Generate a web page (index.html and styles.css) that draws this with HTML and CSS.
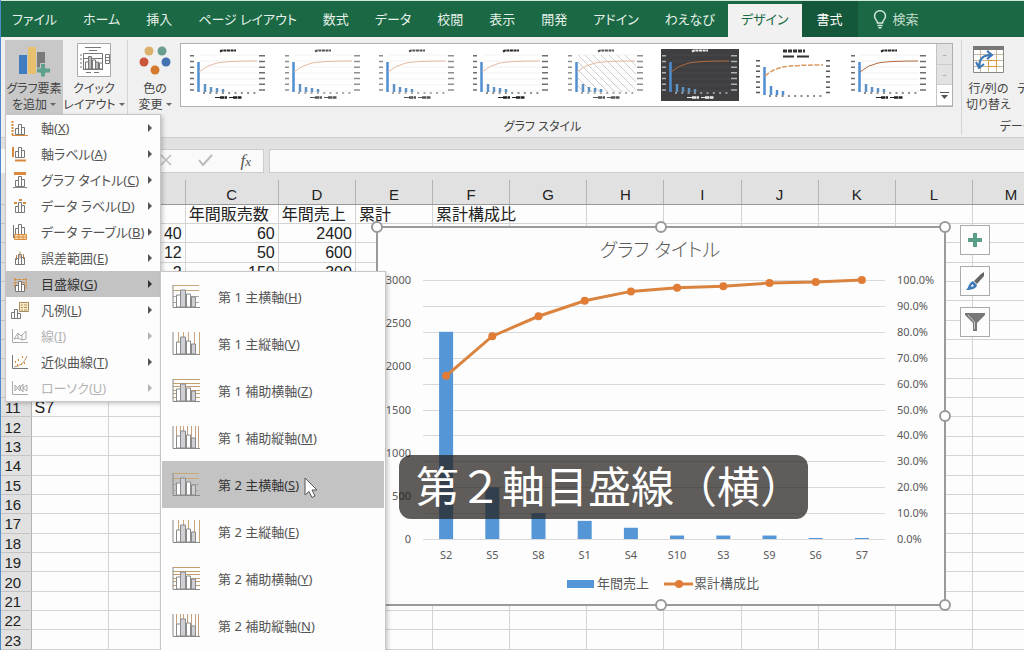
FILE: index.html
```html
<!DOCTYPE html>
<html lang="ja">
<head>
    <meta charset="UTF-8">
    <title>グラフ ツール - デザイン</title>
    <link rel="stylesheet" href="styles.css">
</head>
<body>
    <!-- shared icon shapes -->
    <svg class="defs" aria-hidden="true">
        <symbol id="mini-bars" viewBox="0 0 18 16">
            <path d="M4.500 14.500v-6h3v6zM7.500 14.500v-10h3v10zM10.500 14.500v-7h3v7z" fill="#fff" stroke="#777"/>
        </symbol>
        <symbol id="sub-bars" viewBox="0 0 28 24">
            <path d="M1 0v22.500h27" fill="none" stroke="#8a8a8a"/>
            <path d="M4.500 22v-12h4v12zM14.500 22v-13h4v13z" fill="#fff" stroke="#8a8a8a"/>
            <path d="M8.500 22v-17h5v17zM19.500 22v-10h4v10z" fill="#d0d0d4" stroke="#8a8a8a"/>
        </symbol>
        <symbol id="h-major" viewBox="0 0 28 24">
            <path d="M1 .5h26M1 5.500h26" stroke="#c9a878"/>
            <path d="M1 11.500h26M1 17.500h26" stroke="#aaa"/>
        </symbol>
        <symbol id="v-major" viewBox="0 0 28 24">
            <path d="M6.500 0v22M11.500 0v22M16.500 0v22M22.500 0v22M27.500 0v22" stroke="#c9a878"/>
        </symbol>
        <symbol id="h-minor" viewBox="0 0 28 24">
            <path d="M1 .5h27M1 4.500h27M1 7.500h27M1 11.500h27M1 14.500h27M1 18.500h27" stroke="#c4a06c"/>
        </symbol>
        <symbol id="v-minor" viewBox="0 0 28 24">
            <path d="M4.500 0v22M8.500 0v22M11.500 0v22M15.500 0v22M19.500 0v22M23.500 0v22M26.500 0v22" stroke="#c4a080"/>
        </symbol>
        <symbol id="thumb" viewBox="0 0 90 58">
            <path d="M17 9h58M17 15h58M17 21h58M17 27h58M17 33h58M17 39h58M17 45h58" stroke="currentColor" stroke-width=".5" opacity=".12"/>
            <path d="M37 5.500l2-1h14" stroke="currentColor" stroke-width="2" stroke-dasharray="3 .6" fill="none"/>
            <path d="M9 9v38" stroke="currentColor" stroke-width="4" stroke-dasharray="1.500 4.200" opacity=".65"/>
            <path d="M79 9v38" stroke="currentColor" stroke-width="6" stroke-dasharray="1.500 4.200" opacity=".65"/>
            <path d="M20 47h55" stroke="currentColor" stroke-width="2" stroke-dasharray="2 4.300" opacity=".5"/>
            <path d="M15.500 16v30" stroke="#4f8fd0" stroke-width="2.500"/>
            <path d="M22 38v8M28 41v5M34 42v4M40 43v3" stroke="#5f93c4" stroke-width="2.500"/>
            <path d="M32 51.500h5M46 51.500h4" stroke="currentColor" stroke-width="1"/>
            <path d="M37 51.500h7M50 51.500h9" stroke="currentColor" stroke-width="2.500" stroke-dasharray="4 .5"/>
        </symbol>
        <symbol id="curve" viewBox="0 0 90 58">
            <path d="M16 26Q24 19 34 17T74 15" fill="none" stroke="currentColor"/>
        </symbol>
    </svg>

    <nav class="tabs">
        <button class="tab">ファイル</button>
        <button class="tab">ホーム</button>
        <button class="tab">挿入</button>
        <button class="tab">ページ レイアウト</button>
        <button class="tab">数式</button>
        <button class="tab">データ</button>
        <button class="tab">校閲</button>
        <button class="tab">表示</button>
        <button class="tab">開発</button>
        <button class="tab">アドイン</button>
        <button class="tab">わえなび</button>
        <button class="tab active">デザイン</button>
        <button class="tab context">書式</button>
        <button class="tab search">
            <svg width="14" height="19" viewBox="0 0 14 19" fill="none" stroke="#d5e8dd" stroke-width="1.500">
                <path d="M4.500 13c0-2.500-3-3.500-3-7a5.500 5.200 0 0 1 11 0c0 3.500-3 4.500-3 7zM4.500 15.500h5M5.500 17.800h3"/>
            </svg>
            検索
        </button>
    </nav>

    <div class="ribbon">
        <section class="group">
            <div class="tools">
                <div class="dropdown">
                    <button class="tool pressed">
                        <svg width="34" height="34" viewBox="0 0 34 34">
                            <path fill="#3f7cc0" d="M2 12h8v19H2z"/>
                            <path fill="#e6c06c" d="M11 4h8v27h-8z"/>
                            <path fill="#7a7a7a" d="M20 9h8v12h-4v4h-4z"/>
                            <path fill="#5fa08e" stroke="#c8c8c8" d="M23.500 20.500h5v4.500h5v5h-5v4h-5v-4h-4v-5h4z"/>
                        </svg>
                        <span>グラフ要素<br>を追加 <i class="caret"></i></span>
                    </button>
                    <ul class="menu">
                        <li><button>
                            <svg width="18" height="16"><use href="#mini-bars"/><path d="M1.500 1v14" stroke="#d98a3d" stroke-width="2" stroke-dasharray="2 1"/><path d="M1 15.500h16" stroke="#d98a3d"/></svg>
                            <span>軸(<u>X</u>)</span><i class="arrow"></i></button></li>
                        <li><button>
                            <svg width="18" height="16"><use href="#mini-bars" y="-3"/><path d="M2 1v10M4 14.500h11" stroke="#d98a3d" stroke-width="2"/></svg>
                            <span>軸ラベル(<u>A</u>)</span><i class="arrow"></i></button></li>
                        <li><button>
                            <svg width="18" height="16"><use href="#mini-bars"/><path d="M3 1.500h12" stroke="#d98a3d" stroke-width="3"/><path d="M2 15.500h14" stroke="#888"/></svg>
                            <span>グラフ タイトル(<u>C</u>)</span><i class="arrow"></i></button></li>
                        <li><button>
                            <svg width="18" height="16"><use href="#mini-bars"/><path d="M3 5h3M8 2h3M12 5h3" stroke="#d98a3d" stroke-width="2"/></svg>
                            <span>データ ラベル(<u>D</u>)</span><i class="arrow"></i></button></li>
                        <li><button>
                            <svg width="18" height="16"><use href="#mini-bars" y="-4"/><path d="M2.500 1v13" stroke="#777"/><path d="M3.500 10.500h12v5h-12zM3.500 13h12M8 10v6M12 10v6" fill="#f8dfb5" stroke="#d98a3d"/></svg>
                            <span>データ テーブル(<u>B</u>)</span><i class="arrow"></i></button></li>
                        <li><button>
                            <svg width="18" height="16"><use href="#mini-bars"/><path d="M5.500 5v5M9 1.500v7M12.500 4v5" stroke="#b08050"/></svg>
                            <span>誤差範囲(<u>E</u>)</span><i class="arrow"></i></button></li>
                        <li class="selected"><button>
                            <svg width="18" height="16"><path d="M3 3.500h13M3 6.500h13M3 9.500h13M4 2v12M15 2v12" stroke="#d98a3d" stroke-dasharray="3 1"/><use href="#mini-bars" y="1"/></svg>
                            <span>目盛線(<u>G</u>)</span><i class="arrow"></i></button>
                            <ul class="menu submenu">
                                <li><button><svg width="28" height="24"><use href="#h-major"/><use href="#sub-bars"/></svg><span>第 1 主横軸(<u>H</u>)</span></button></li>
                                <li><button><svg width="28" height="24"><use href="#v-major"/><use href="#sub-bars"/></svg><span>第 1 主縦軸(<u>V</u>)</span></button></li>
                                <li><button><svg width="28" height="24"><use href="#h-minor"/><use href="#sub-bars"/></svg><span>第 1 補助横軸(<u>Z</u>)</span></button></li>
                                <li><button><svg width="28" height="24"><use href="#v-minor"/><use href="#sub-bars"/></svg><span>第 1 補助縦軸(<u>M</u>)</span></button></li>
                                <li class="selected"><button><svg width="28" height="24"><use href="#h-major"/><use href="#sub-bars"/></svg><span>第 2 主横軸(<u>S</u>)</span></button>
                                    <svg class="pointer" width="14" height="22" viewBox="0 0 14 22"><path d="M1 1v17l4-3.500 3 6 3-1.500-3-6h5z" fill="#fff" stroke="#555"/></svg>
                                </li>
                                <li><button><svg width="28" height="24"><use href="#v-major"/><use href="#sub-bars"/></svg><span>第 2 主縦軸(<u>E</u>)</span></button></li>
                                <li><button><svg width="28" height="24"><use href="#h-minor"/><use href="#sub-bars"/></svg><span>第 2 補助横軸(<u>Y</u>)</span></button></li>
                                <li><button><svg width="28" height="24"><use href="#v-minor"/><use href="#sub-bars"/></svg><span>第 2 補助縦軸(<u>N</u>)</span></button></li>
                            </ul>
                        </li>
                        <li><button>
                            <svg width="18" height="18" viewBox="0 0 18 18"><path d="M.5 17.500v-6h3v6zM3.500 17.500v-9h3v9zM6.500 17.500v-5h3v5z" fill="#fff" stroke="#777"/><path d="M8.500 1.500h9v9h-9z" fill="#fbecc8" stroke="#a98c5c"/><path d="M10 4h2M13 4h3M10 6.500h2M13 6.500h3M10 9h2M13 9h3" stroke="#a98c5c"/></svg>
                            <span>凡例(<u>L</u>)</span><i class="arrow"></i></button></li>
                        <li><button disabled>
                            <svg width="18" height="16" fill="none" stroke="#aaa"><path d="M1.500 1v13.500H17M3 11l4-6 3 3 5-5v8l-4 1-4-2zM7 5v6M11 7v5"/></svg>
                            <span>線(<u>I</u>)</span><i class="arrow"></i></button></li>
                        <li><button>
                            <svg width="18" height="16" fill="none"><path d="M1.500 1v13.500H17" stroke="#777"/><path d="M3 13q9-1 13-11" stroke="#b09a70"/><path d="M4 8h1M7 6h1M10 10h1M13 9h1M11 3h1M6 11h1" stroke="#e08a30" stroke-width="2"/></svg>
                            <span>近似曲線(<u>T</u>)</span><i class="arrow"></i></button></li>
                        <li><button disabled>
                            <svg width="18" height="16" fill="none" stroke="#aaa"><path d="M1.500 1v13.500H17M4 5l5 6V5l-5 6zM9 8l3-4v8zM12 8l4-3v6z"/></svg>
                            <span>ローソク(<u>U</u>)</span><i class="arrow"></i></button></li>
                    </ul>
                </div>
                <button class="tool">
                    <svg width="34" height="34" viewBox="0 0 34 34" fill="none" stroke="#777">
                        <path d="M.5 .5h33v33H.5z" fill="#fff" stroke="#aaa"/>
                        <path d="M8 4.500h16M12 7.500h8M6.500 26V10.500h19V26M3 12h2M3 16h2M3 20h2M3 24h2M6 26.500h20M9 29.500h5M17 29.500h5M6 15.500h19"/>
                        <path d="M8.500 26v-7h3v7zM15.500 26v-9h3v9zM22.500 26v-6h3v6z" fill="#fff"/>
                        <path d="M11.500 26V13.500h3V26zM18.500 26v-7h3v7z" fill="#bbb"/>
                        <path d="M28.500 11.500h4v9h-4zM29 14.500h3M29 17.500h3"/>
                    </svg>
                    <span>クイック<br>レイアウト <i class="caret"></i></span>
                </button>
            </div>
        </section>

        <section class="group styles">
            <div class="tools">
                <button class="tool narrow">
                    <svg width="34" height="34" viewBox="0 0 34 34">
                        <circle cx="11" cy="8" r="4.500" fill="#dbb26a"/>
                        <circle cx="24" cy="8" r="4.500" fill="#6a9f90"/>
                        <circle cx="6" cy="19" r="4.500" fill="#c9553a"/>
                        <circle cx="28" cy="19" r="4.500" fill="#4470b4"/>
                        <circle cx="17" cy="27" r="4.500" fill="#d57a2c"/>
                    </svg>
                    <span>色の<br>変更 <i class="caret"></i></span>
                </button>
                <div class="gallery">
                    <button class="style" aria-label="スタイル 1"><svg viewBox="0 0 90 58"><use href="#thumb"/><use href="#curve" class="pale"/></svg></button>
                    <button class="style soft" aria-label="スタイル 2"><svg viewBox="0 0 90 58"><use href="#thumb"/><use href="#curve" class="pale"/></svg></button>
                    <button class="style soft" aria-label="スタイル 3"><svg viewBox="0 0 90 58"><use href="#thumb"/><use href="#curve" class="pale"/></svg></button>
                    <button class="style" aria-label="スタイル 4"><svg viewBox="0 0 90 58"><use href="#thumb"/><use href="#curve" class="pale"/></svg></button>
                    <button class="style soft" aria-label="スタイル 5"><svg viewBox="0 0 90 58">
                        <path d="M17 40l6 6M17 32l14 14M17 24l22 22M17 16l30 30M17 9l37 37M24 9l37 37M32 9l37 37M40 9l35 35M48 9l27 27M56 9l19 19M64 9l11 11" stroke="#bbb" stroke-width=".7"/>
                        <use href="#thumb"/><use href="#curve" class="pale"/></svg></button>
                    <button class="style dark" aria-label="スタイル 6"><svg viewBox="0 0 90 58"><path d="M6 3h78v52H6z" fill="#3f3f41"/><use href="#thumb"/><use href="#curve" class="deep"/></svg></button>
                    <button class="style" aria-label="スタイル 7"><svg viewBox="0 0 90 58">
                        <path d="M34 5h22" stroke="#333" stroke-width="3" stroke-dasharray="4 1"/>
                        <path d="M34 10.500h11M48 10.500h12" stroke="#333" stroke-width="2"/>
                        <path d="M9 14v36M79 14v36" stroke="#555" stroke-width="4" stroke-dasharray="1.500 3.800"/>
                        <path d="M15.500 21v28M22 40v9M28 44v5M34 45v4" stroke="#4f8fd0" stroke-width="2.500"/>
                        <path d="M16 30Q24 23 34 21T74 19" fill="none" stroke="#d99a60" stroke-dasharray="5 1.500" stroke-width="1.500"/>
                        <path d="M20 50h55" stroke="#888" stroke-width="2" stroke-dasharray="2 4.300"/></svg></button>
                    <button class="style" aria-label="スタイル 8"><svg viewBox="0 0 90 58"><use href="#thumb"/><use href="#curve" class="deep"/></svg></button>
                    <div class="scroller">
                        <button aria-label="上へ" disabled>-</button>
                        <button aria-label="下へ" disabled>-</button>
                        <button aria-label="その他"><svg width="9" height="8" viewBox="0 0 9 8"><path d="M0 .5h9" stroke="#555"/><path d="M1 3h7L4.500 7z" fill="#555"/></svg></button>
                    </div>
                </div>
            </div>
            <h2>グラフ スタイル</h2>
        </section>

        <section class="group data">
            <div class="tools">
                <button class="tool narrow">
                    <svg width="34" height="34" viewBox="0 0 34 34" fill="none">
                        <path d="M2.500 3.500h30v26h-30z" fill="#fff" stroke="#888"/>
                        <path d="M2 5h31" stroke="#777" stroke-width="4"/>
                        <path d="M3 11.500h29M3 17.500h29M3 23.500h29M9.500 7v22M17.500 7v22M25.500 7v22" stroke="#c8b8a0"/>
                        <path d="M17.500 17.500h8v6h-8z" stroke="#e0902c"/>
                        <path d="M8 24Q8 12 20 12M16 8l5 4-5 4M5 19l3 6 5-4" stroke="#3c78b8" stroke-width="2"/>
                    </svg>
                    <span>行/列の<br>切り替え</span>
                </button>
                <button class="tool">
                    <svg width="34" height="34" viewBox="0 0 34 34"><path d="M2.500 3.500h30v26h-30z" fill="#fff" stroke="#888"/><path d="M2 5h31" stroke="#777" stroke-width="4"/></svg>
                    <span>データの<br>選択</span>
                </button>
            </div>
            <h2>データ</h2>
        </section>
    </div>

    <div class="formula-bar">
        <div class="name-box"></div>
        <div class="fx">
            <button aria-label="キャンセル"><svg width="12" height="12" viewBox="0 0 12 12"><path d="M1 1l10 10M11 1L1 11" stroke="#bbb" stroke-width="1.500"/></svg></button>
            <button aria-label="入力"><svg width="16" height="12" viewBox="0 0 16 12"><path d="M1 6l4 5L14 1" fill="none" stroke="#bbb" stroke-width="2"/></svg></button>
            <button class="fn" aria-label="関数の挿入">f<small>x</small></button>
        </div>
        <input class="formula" type="text" aria-label="数式バー">
    </div>

    <main class="sheet">
        <table class="cells">
            <thead><tr id="columns"></tr></thead>
            <tbody id="rows"></tbody>
        </table>

        <div class="chart">
            <svg id="chart" width="568" height="378" viewBox="0 0 568 378"></svg>
        </div>
        <div class="chart-tools">
            <button aria-label="グラフ要素"><svg width="16" height="16" viewBox="0 0 16 16"><path d="M6 1h4v5h5v4h-5v5H6v-5H1V6h5z" fill="#5a9e8a"/></svg></button>
            <button aria-label="グラフ スタイル"><svg width="20" height="20" viewBox="0 0 20 20"><path d="M19 1v4l-7 8-3-3 7-7z" fill="#666"/><path d="M8 10l4 4c0 3-5 5-11 5 3-2 2-7 7-9z" fill="#3f7ab8"/><path d="M7 13l2 2-3 1z" fill="#fff"/></svg></button>
            <button aria-label="グラフ フィルター"><svg width="20" height="18" viewBox="0 0 20 18"><path d="M0 0h20v2l-8 8v8H8v-8L0 2z" fill="#777"/><path d="M3 2l6.500 7v7" fill="none" stroke="#ccc"/></svg></button>
        </div>
        <p class="caption">第２軸目盛線（横）</p>
    </main>

    <script src="script.js"></script>
</body>
</html>
```
FILE: styles.css
```css
* {
    box-sizing: border-box;
}
body {
    margin: 0;
    height: 100vh;
    display: flex;
    flex-direction: column;
    overflow: hidden;
    border-left: 1px solid #4a8cc8;
    background: #fdfdfd;
    color: #444;
    font: 13px/16px "Noto Sans", "Noto Sans CJK JP", sans-serif;
    font-feature-settings: "palt";
}
button {
    padding: 0;
    border: 0;
    background: none;
    color: inherit;
    font: inherit;
    font-feature-settings: inherit;
    white-space: nowrap;
}
.defs {
    position: absolute;
    width: 0;
    height: 0;
}

/* tabs */
.tabs {
    display: flex;
    height: 37px;
    flex: none;
    border-top: 1px solid #cfe8da;
    background: #1a6844;
    color: #e6f2ea;
}
.tab {
    padding: 0 13px;
}
.tab:first-child {
    padding-left: 11px;
}
.tab.active {
    margin-top: 3px;
    padding-bottom: 3px;
    background: #f1f1f1;
    color: #1a6844;
}
.tab.context {
    padding: 0 15px;
    background: #15573a;
    color: #fff;
}
.tab.search {
    display: flex;
    align-items: center;
    gap: 6px;
    padding: 0 15px;
    color: #c5dccf;
}

/* ribbon */
.ribbon {
    display: flex;
    height: 101px;
    flex: none;
    padding-left: 4px;
    border-bottom: 1px solid #ccc;
    background: #f0f0f0;
}
.group {
    display: flex;
    flex-direction: column;
    justify-content: space-between;
    flex: none;
    margin: 3px 0 2px;
    padding-right: 4px;
    border-right: 1px solid #d4d4d4;
}
.group.styles {
    flex: 1;
    min-width: 0;
    padding: 0 8px 0 4px;
}
.group.data {
    width: 110px;
    margin-right: -48px;
    padding: 0 4px;
}
.group h2 {
    margin: 0;
    font-size: 12px;
    font-weight: 400;
    line-height: 16px;
    text-align: center;
}
.tools {
    display: flex;
    gap: 2px;
}
.tool {
    display: flex;
    flex-direction: column;
    align-items: center;
    width: 58px;
    height: 74px;
    padding-top: 3px;
    gap: 4px;
    font-size: 12px;
}
.tool.narrow {
    width: 46px;
}
.tool.pressed {
    background: #c8c8c8;
}
.caret {
    display: inline-block;
    margin-bottom: 3px;
    border: 3px solid transparent;
    border-top-color: #666;
    border-bottom: 0;
}
.gallery {
    display: grid;
    grid-template-columns: repeat(8, 1fr) 16px;
    flex: 1;
    height: 64px;
    margin-top: 3px;
    border: 1px solid #b0b0b0;
    background: #fff;
}
.style {
    display: flex;
    align-items: center;
    justify-content: center;
    color: #222;
}
.style svg {
    width: 90px;
    height: 58px;
}
.style.soft {
    color: #555;
}
.style.dark {
    color: #eee;
}
.pale {
    color: #e8b8a4;
}
.deep {
    color: #b06a3c;
}
.scroller {
    display: grid;
    border-left: 1px solid #c4c4c4;
}
.scroller button {
    border-bottom: 1px solid #ccc;
    background: #fff;
    line-height: 12px;
}
.scroller button:disabled {
    background: #e2e2e2;
    color: #aaa;
}

/* menus */
.dropdown {
    position: relative;
}
.menu {
    position: absolute;
    z-index: 10;
    top: 100%;
    left: 0;
    width: 156px;
    margin: 0;
    padding: 0;
    list-style: none;
    border: 1px solid #c6c6c6;
    background: #fdfdfd;
    box-shadow: 2px 2px 4px rgba(0,0,0,0.2);
}
.menu li {
    position: relative;
}
.menu button {
    display: flex;
    align-items: center;
    gap: 12px;
    width: 100%;
    height: 26px;
    padding: 0 8px 0 5px;
    text-align: left;
    color: #555;
}
.menu button > svg {
    flex: none;
    overflow: visible;
}
.menu span {
    flex: 1;
    min-width: 0;
}
.menu .selected > button {
    background: #c3c3c3;
    color: #333;
}
.menu button:disabled {
    color: #b4b4b4;
}
.arrow {
    border: 4px solid transparent;
    border-left-color: currentColor;
    border-right: 0;
}
.submenu {
    top: 0;
    left: 100%;
    width: 226px;
    padding: 1px 1px 8px;
}
.submenu button {
    height: 47px;
    gap: 18px;
    padding-left: 10px;
}
.pointer {
    position: absolute;
    top: 16px;
    left: 142px;
}

/* formula bar */
.formula-bar {
    display: flex;
    flex: none;
    gap: 5px;
    height: 42px;
    padding: 11px 0 7px;
    background: #e1e1e1;
}
.name-box {
    width: 120px;
    background: #fafafa;
}
.fx {
    display: flex;
    justify-content: flex-end;
    gap: 26px;
    width: 138px;
    padding-right: 12px;
    border: 1px solid #ccc;
    background: #fafafa;
}
.fn {
    font: italic 17px/20px "Liberation Serif", serif;
    color: #555;
}
.fn small {
    font-size: 13px;
}
.formula {
    flex: 1;
    min-width: 0;
    border: 1px solid #ccc;
    border-right: 0;
    background: #fafafa;
}

/* worksheet */
.sheet {
    position: relative;
    flex: 1;
    min-height: 0;
}
.cells {
    width: calc(100% + 26px);
    height: 100%;
    table-layout: fixed;
    border-collapse: collapse;
    color: #222;
    font: 16px/16px "Liberation Sans", "Noto Sans CJK JP", sans-serif;
}
.cells th {
    height: 24px;
    padding: 6px 0 0;
    border-right: 1px solid #b4b4b4;
    border-bottom: 1px solid #999;
    background: #e1e1e1;
    font-size: 15px;
    font-weight: 400;
}
.cells .row-head {
    width: 30px;
    height: auto;
    padding: 2px 6px 0 0;
    border-bottom-color: #c4c4c4;
}
.cells .wide {
    width: 93px;
}
.cells td {
    padding: 2px 3px 0;
    border: 1px solid #d4d4d4;
    white-space: nowrap;
}
.cells .number {
    text-align: right;
}

/* chart */
.chart {
    position: absolute;
    top: 47px;
    left: 376px;
    background: #fdfdfd;
}
.chart svg {
    display: block;
    overflow: visible;
}
.frame {
    fill: none;
    stroke: #9a9a9a;
    stroke-width: 2;
}
.handle {
    fill: #fff;
    stroke: #999;
    stroke-width: 2;
}
.chart text {
    fill: #595959;
    font-size: 11px;
}
.chart .title {
    font-size: 19px;
    font-weight: 300;
}
.chart .legend {
    font-size: 13px;
}
.grid {
    stroke: #d9d9d9;
}
.bar {
    fill: #5596d6;
}
.line {
    fill: none;
    stroke: #d9833f;
    stroke-width: 3;
}
.dot {
    fill: #e07c35;
}
.chart-tools {
    position: absolute;
    top: 45px;
    left: 959px;
    display: grid;
    gap: 11px;
}
.chart-tools button {
    display: flex;
    align-items: center;
    justify-content: center;
    width: 30px;
    height: 30px;
    border: 1px solid #aaa;
    background: #fdfdfd;
}
.caption {
    position: absolute;
    top: 275px;
    left: 398px;
    margin: 0;
    padding: 0 5px 6px 17px;
    border-radius: 12px;
    background: rgba(37,32,28,0.73);
    color: #fff;
    font-family: "Noto Sans CJK JP", sans-serif;
    font-size: 43px;
    line-height: 58px;
    font-feature-settings: normal;
    white-space: nowrap;
}
```
FILE: script.js
```js
// worksheet
const columns = 'ABCDEFGHIJKLM'.split('');
const values = {
    C1: '年間販売数', D1: '年間売上', E1: '累計', F1: '累計構成比',
    B2: 40, C2: 60, D2: 2400,
    B3: 12, C3: 50, D3: 600,
    B4: 2, C4: 150, D4: 300,
    A11: 'S7'
};

document.getElementById('columns').innerHTML = '<th class="row-head"></th>' +
    columns.map(c => `<th${c === 'C' ? ' class="wide"' : ''}>${c === 'A' ? '' : c}</th>`).join('');

let rows = '';
for (let r = 1; r <= 23; r++) {
    rows += `<tr><th class="row-head">${r}</th>`;
    columns.forEach(c => {
        const v = values[c + r];
        rows += `<td${typeof v === 'number' ? ' class="number"' : ''}>${v === undefined ? '' : v}</td>`;
    });
    rows += '</tr>';
}
document.getElementById('rows').innerHTML = rows;

// pareto chart
const items = [
    ['S2', 2400, 63], ['S5', 600, 78.3], ['S8', 300, 86], ['S1', 210, 92], ['S4', 130, 95.6],
    ['S10', 40, 97], ['S3', 40, 97.6], ['S9', 40, 98.8], ['S6', 12, 99.2], ['S7', 12, 100]
];
const left = 46, right = 508, top0 = 53, bottom = 312;
const step = (right - left) / items.length;
const y = share => bottom - (bottom - top0) * share;

let svg = '<rect class="frame" width="568" height="378"/>';
svg += '<text class="title" x="283" y="30" text-anchor="middle">グラフ タイトル</text>';

for (let p = 0; p <= 100; p += 10) {
    const line = Math.round(y(p / 100)) + 0.5;
    svg += `<path class="grid" d="M${left} ${line}H${right}"/>`;
    svg += `<text x="520" y="${Math.round(y(p / 100)) + 4}">${p.toFixed(1)}%</text>`;
}
for (let v = 0; v <= 3000; v += 500) {
    svg += `<text x="34" y="${Math.round(y(v / 3000)) + 4}" text-anchor="end">${v}</text>`;
}

const points = [];
items.forEach(([name, sales, percent], i) => {
    const x = left + step * (i + 0.5);
    const barTop = y(sales / 3000);
    svg += `<rect class="bar" x="${x - 7}" y="${barTop}" width="14" height="${bottom - barTop}"/>`;
    svg += `<text x="${x}" y="332" text-anchor="middle">${name}</text>`;
    points.push([x, y(percent / 100)]);
});
svg += `<polyline class="line" points="${points.join(' ')}"/>`;
points.forEach(([x, py]) => {
    svg += `<circle class="dot" cx="${x}" cy="${py}" r="4"/>`;
});

svg += '<rect class="bar" x="190" y="353" width="27" height="8"/>';
svg += '<text class="legend" x="220" y="361">年間売上</text>';
svg += '<path class="line" d="M287 357h29"/><circle class="dot" cx="302" cy="357" r="4"/>';
svg += '<text class="legend" x="317" y="361">累計構成比</text>';

[[0, 0], [284, 0], [568, 0], [568, 189], [284, 378], [568, 378]].forEach(([cx, cy]) => {
    svg += `<circle class="handle" cx="${cx}" cy="${cy}" r="5"/>`;
});
document.getElementById('chart').innerHTML = svg;
```
